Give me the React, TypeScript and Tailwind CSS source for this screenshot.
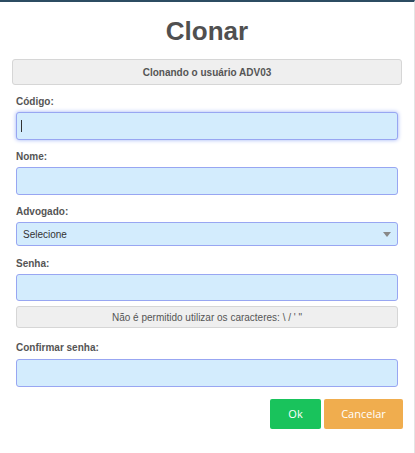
import { useState } from "react";

const box = "block w-full rounded-[3px] border border-[#98a6f2] bg-[#d3ecfd] text-[10px] text-[#333] outline-none";

function Label({ children }: { children: React.ReactNode }) {
  return <label className="block text-[10px] font-bold leading-[14px] text-[#555] mb-[3px]">{children}</label>;
}

export default function App() {
  const [codigo, setCodigo] = useState("");
  return (
    <div
      className="w-[415px] h-[453px] bg-white border-t-2 border-t-[#2c4c62] border-r border-r-[#e4e4e4]"
      style={{ fontFamily: '"Liberation Sans", Arial, sans-serif' }}
    >
      <h1 className="text-center text-[26px] font-bold text-[#505050] leading-[30px] pt-[14px]">Clonar</h1>
      <div className="mx-[12px] mt-[13px] h-[26px] rounded-[3px] border border-[#d6d6d6] bg-[#efefef] flex items-center justify-center text-[10px] font-bold text-[#555]">
        Clonando o usuário ADV03
      </div>
      <div className="px-[16px]">
        <div className="mt-[10px]">
          <Label>Código:</Label>
          <div className="relative">
            <input
              autoFocus
              value={codigo}
              onChange={(e) => setCodigo(e.target.value)}
              className={box + " h-[28px] px-[6px] shadow-[0_0_4px_#9fb3f5] caret-[#333]"}
            />
            {codigo === "" && (
              <span className="pointer-events-none absolute left-[5px] top-[8px] w-px h-[12px] bg-[#333]" />
            )}
          </div>
        </div>
        <div className="mt-[10px]">
          <Label>Nome:</Label>
          <input className={box + " h-[28px] px-[6px]"} />
        </div>
        <div className="mt-[10px]">
          <Label>Advogado:</Label>
          <div className="relative">
            <select className={box + " h-[24px] appearance-none px-[6px]"}>
              <option>Selecione</option>
            </select>
            <div className="pointer-events-none absolute right-[7px] top-[10px] w-0 h-0 border-x-[4px] border-x-transparent border-t-[5px] border-t-[#888]" />
          </div>
        </div>
        <div className="mt-[11px]">
          <Label>Senha:</Label>
          <input type="password" className={box + " h-[27px] px-[6px]"} />
          <div className="mt-[5px] h-[22px] rounded-[3px] border border-[#d6d6d6] bg-[#efefef] flex items-center justify-center text-[10px] text-[#555]">
            Não é permitido utilizar os caracteres: \ / ' "
          </div>
        </div>
        <div className="mt-[13px]">
          <label className="block text-[10px] font-bold leading-[14px] text-[#555] mb-[4px]">Confirmar senha:</label>
          <input type="password" className={box + " h-[28px] px-[6px]"} />
        </div>
      </div>
      <div className="flex justify-end gap-[3px] mt-[12px] pr-[11px]" style={{ fontFamily: '"Open Sans", sans-serif' }}>
        <button className="w-[51px] h-[30px] rounded-[2px] bg-[#19c35c] text-white text-[11px]">Ok</button>
        <button className="w-[79px] h-[30px] rounded-[2px] bg-[#f0ad4e] text-white text-[11px]">Cancelar</button>
      </div>
    </div>
  );
}
